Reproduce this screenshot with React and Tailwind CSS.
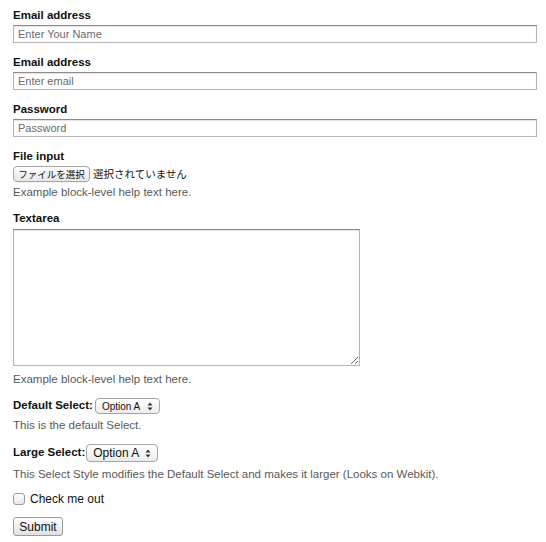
import React from "react";

function Arrows() {
  return (
    <svg width="6" height="9" viewBox="0 0 6 9" className="ml-auto">
      <path d="M3 0.5 L5.5 3.5 L0.5 3.5 Z" fill="#333" />
      <path d="M3 8.5 L5.5 5.5 L0.5 5.5 Z" fill="#333" />
    </svg>
  );
}

const inputCls =
  "block w-[524px] h-[18px] border border-[#b4b4b4] border-t-[#8c8c8c] bg-white shadow-[inset_0_1px_1px_rgba(0,0,0,0.12)] px-[4px] text-[11px] leading-[16px] text-[#333] placeholder:text-[#6a6a6a] outline-none";

const labelCls = "block h-4 leading-4 font-bold text-[#111]";

export default function App() {
  return (
    <div
      className="w-[546px] h-[542px] bg-white pl-[13px] pt-[7px] text-[11.5px] text-[#333]"
      style={{ fontFamily: '"Liberation Sans", Arial, sans-serif' }}
    >
      <label className={labelCls + " mb-[2px]"}>Email address</label>
      <input className={inputCls} placeholder="Enter Your Name" />
      <label className={labelCls + " mt-[11px] mb-[2px]"}>Email address</label>
      <input className={inputCls} placeholder="Enter email" />
      <label className={labelCls + " mt-[11px] mb-[2px]"}>Password</label>
      <input className={inputCls} type="text" placeholder="Password" />

      <label className={labelCls + " mt-[11px] mb-[2px]"}>File input</label>
      <div className="flex items-center h-4">
        <div
          className="h-[16px] w-[77px] flex items-center justify-center rounded-[4px] border border-[#a6a6a6] bg-gradient-to-b from-white to-[#e6e6e6] text-[9.5px] text-[#111] shadow-[0_1px_0_rgba(0,0,0,0.05)]"
          style={{ fontFamily: '"Noto Sans CJK JP", sans-serif' }}
        >
          ファイルを選択
        </div>
        <span
          className="ml-[3px] text-[10.5px] text-[#111]"
          style={{ fontFamily: '"Noto Sans CJK JP", sans-serif' }}
        >
          選択されていません
        </span>
      </div>
      <p className="h-4 leading-4 mt-[2px] text-[#595959]">Example block-level help text here.</p>

      <label className={labelCls + " mt-[10px] mb-[3px]"}>Textarea</label>
      <textarea className="block w-[347px] h-[137px] border border-[#b4b4b4] border-t-[#8c8c8c] shadow-[inset_0_1px_1px_rgba(0,0,0,0.12)] outline-none" />
      <p className="h-4 leading-4 mt-[5px] text-[#595959]">Example block-level help text here.</p>

      <div className="flex items-center h-4 mt-[11px]">
        <span className="font-bold text-[#111]">Default Select:</span>
        <div className="ml-[2px] h-[16px] w-[65px] flex items-center pl-[6px] pr-[6px] rounded-[4px] border border-[#a6a6a6] bg-gradient-to-b from-white to-[#ececec] text-[10px] text-[#111]">
          <span>Option A</span>
          <Arrows />
        </div>
      </div>
      <p className="h-4 leading-4 mt-[3px] text-[#595959]">This is the default Select.</p>

      <div className="flex items-center h-[18px] mt-[11px]">
        <span className="font-bold text-[#111]">Large Select:</span>
        <div className="ml-[1px] h-[18px] w-[72px] flex items-center pl-[6px] pr-[6px] rounded-[4px] border border-[#a6a6a6] bg-gradient-to-b from-white to-[#ececec] text-[12px] text-[#111]">
          <span>Option A</span>
          <Arrows />
        </div>
      </div>
      <p className="h-4 leading-4 mt-[4px] text-[#595959]">
        This Select Style modifies the Default Select and makes it larger (Looks on Webkit).
      </p>

      <div className="flex items-center h-4 mt-[9px]">
        <div className="w-[12px] h-[12px] rounded-[3px] border border-[#9a9a9a] bg-gradient-to-b from-white to-[#e8e8e8]" />
        <span className="ml-[5px] text-[12px] text-[#111]">Check me out</span>
      </div>

      <div className="mt-[10px] h-[19px] w-[50px] flex items-center justify-center rounded-[3px] border border-[#9a9a9a] bg-gradient-to-b from-white to-[#e0e0e0] text-[12px] text-[#111]">
        Submit
      </div>
    </div>
  );
}
